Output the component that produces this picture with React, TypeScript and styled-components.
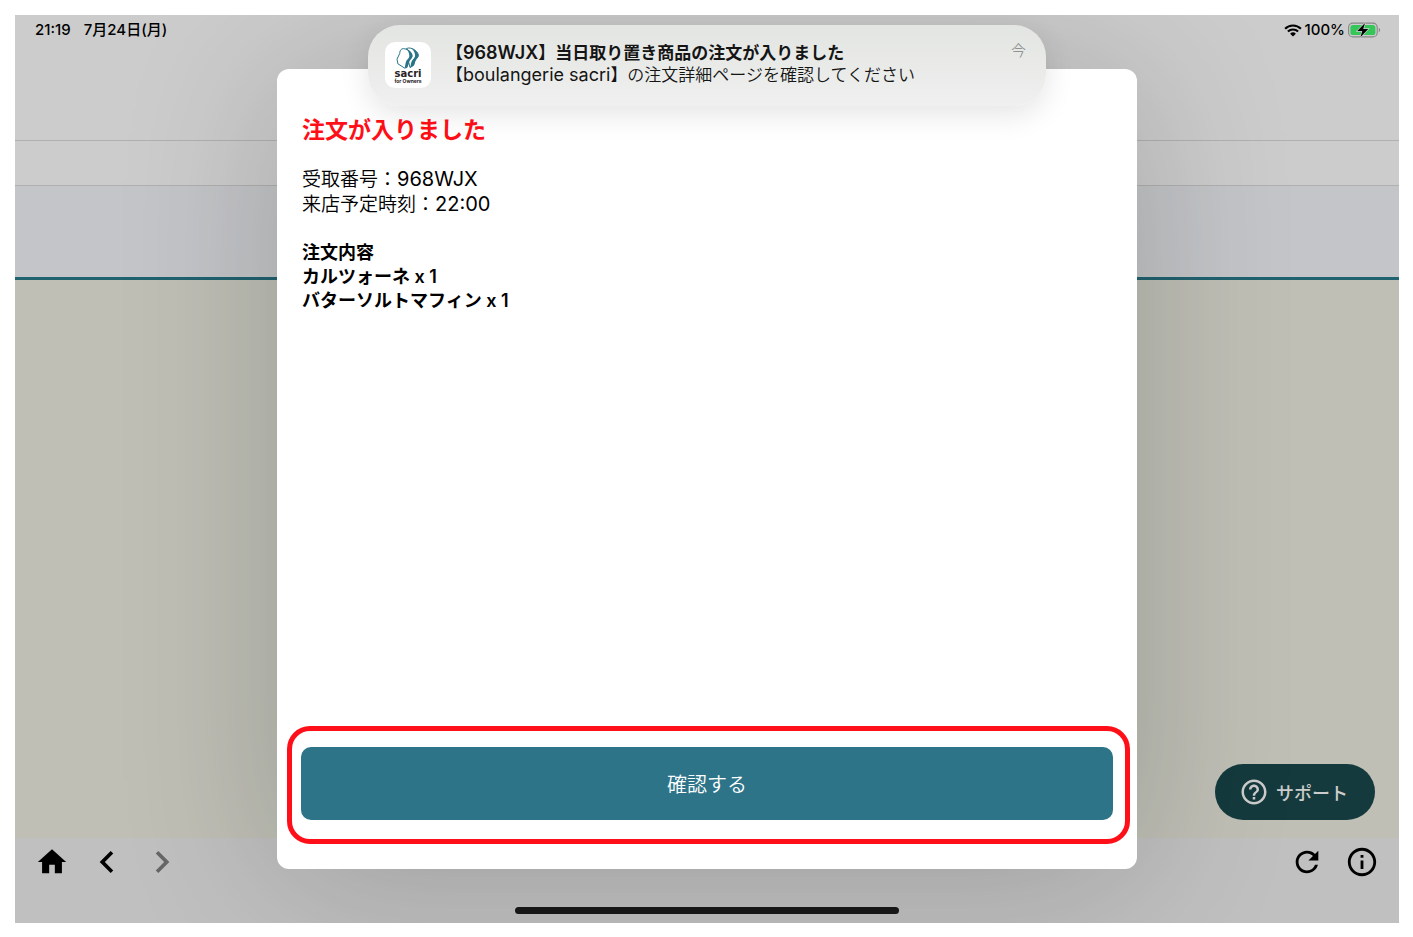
import React from 'react';
import styled, { createGlobalStyle } from 'styled-components';
import {
  MdHome,
  MdChevronLeft,
  MdChevronRight,
  MdRefresh,
  MdInfoOutline,
  MdHelpOutline,
} from 'react-icons/md';

const GlobalStyle = createGlobalStyle`
  * { box-sizing: border-box; }
  body {
    margin: 0;
    background: #fff;
    color: #000;
    font-family: Inter, "Noto Sans CJK JP", sans-serif;
    -webkit-font-smoothing: antialiased;
  }
  button { font: inherit; border: 0; margin: 0; cursor: pointer; }
  h1, h2, p, ul { margin: 0; padding: 0; }
`;

const Page = styled.div`
  min-height: 100vh;
  padding: 15px 14px 14px 15px;
  display: grid;
`;

const Screen = styled.div`
  position: relative;
  display: grid;
  grid-template: 1fr / 1fr;
  overflow: hidden;
`;

const AppLayer = styled.div`
  grid-area: 1 / 1;
  display: flex;
  flex-direction: column;
`;

const Header = styled.header`
  height: 126px;
  padding: 5px 18px 0 20px;
  background: #ccc;
  border-bottom: 1px solid #b0b0b0;
  display: flex;
  justify-content: space-between;
  align-items: flex-start;
`;

const StatusGroup = styled.div<{ $gap: number }>`
  display: flex;
  align-items: center;
  gap: ${(p) => p.$gap}px;
  height: 20px;
  font-size: 15px;
  line-height: 20px;
  font-weight: 500;
`;

const SubHeader = styled.div`
  height: 45px;
  background: #ccc;
  border-bottom: 1px solid #b0b0b0;
`;

const TabStrip = styled.div`
  height: 94px;
  background: #c4c5c8;
  border-bottom: 3px solid #20626f;
`;

const Content = styled.main`
  flex: 1;
  min-height: 200px;
  background: #bfbfb6;
  display: flex;
  justify-content: flex-end;
  align-items: flex-end;
  padding: 0 24px 18px;
`;

const SupportButton = styled.button`
  width: 160px;
  height: 56px;
  padding: 0 24px;
  border-radius: 28px;
  background: #143a3d;
  color: #ccc;
  display: flex;
  align-items: center;
  gap: 7px;
  font-family: "Noto Sans CJK JP", sans-serif;
  font-size: 18px;
  line-height: 24px;
  font-weight: 500;
  white-space: nowrap;

  svg { flex: none; }
`;

const BottomBar = styled.nav`
  height: 85px;
  background: #c0c0c0;
  padding: 0 10px 9px 9px;
  display: flex;
  flex-direction: column;
  justify-content: space-between;
  align-items: center;
`;

const NavRow = styled.div`
  width: 100%;
  display: flex;
  justify-content: space-between;
`;

const NavGroup = styled.div`
  display: flex;
`;

const NavButton = styled.button<{ $muted?: boolean }>`
  width: 55px;
  height: 48px;
  padding: 0;
  background: none;
  color: ${(p) => (p.$muted ? '#666' : '#000')};
  display: flex;
  align-items: center;
  justify-content: center;
`;

const HomeIndicator = styled.div`
  width: 384px;
  max-width: 60%;
  height: 7px;
  border-radius: 4px;
  background: #181818;
`;

const Overlay = styled.div`
  grid-area: 1 / 1;
  z-index: 1;
  padding: 54px 20px;
  display: flex;
  justify-content: center;
  pointer-events: none;
`;

const Dialog = styled.section`
  width: 100%;
  max-width: 860px;
  border-radius: 12px;
  background: #fff;
  box-shadow: 0 10px 160px rgba(0, 14, 0, 0.2);
  display: flex;
  flex-direction: column;
  justify-content: space-between;
  pointer-events: auto;
`;

const OrderDetails = styled.div`
  padding: 44px 25px 24px;
`;

const OrderTitle = styled.h1`
  font-size: 23px;
  line-height: 34px;
  font-weight: 700;
  color: #ff0f17;
`;

const OrderInfo = styled.div`
  margin-top: 20px;
  font-size: 19px;
  line-height: 24px;
  font-weight: 350;
`;

const InfoValue = styled.span`
  font-size: 20px;
  font-weight: 400;
`;

const OrderItems = styled.div`
  margin-top: 24px;
  font-size: 18px;
  line-height: 24px;
  font-weight: 600;

  h2 { font: inherit; }
  ul { list-style: none; }
`;

const ConfirmArea = styled.div`
  margin: 0 7px 25px 10px;
  padding: 16px 12px 19px 9px;
  border: 5px solid #ff0f17;
  border-radius: 23px;
`;

const ConfirmButton = styled.button`
  display: block;
  width: 100%;
  height: 73px;
  border-radius: 10px;
  background: #2d7489;
  color: #fff;
  font-size: 20px;
  font-weight: 350;
`;

const Notification = styled.aside`
  position: absolute;
  z-index: 2;
  top: 10px;
  left: 50%;
  transform: translateX(-50%);
  width: 678px;
  max-width: calc(100% - 40px);
  height: 81px;
  padding: 17px 20px 0 17px;
  border-radius: 32px;
  background: linear-gradient(#e3e5e2, #eff0ef);
  box-shadow: 0 8px 30px rgba(0, 0, 0, 0.11);
  display: flex;
  align-items: flex-start;
`;

const NotificationText = styled.div`
  flex: 1;
  margin-left: 15px;
  font-size: 17px;
  line-height: 22px;
  font-weight: 350;
  color: #151515;
  white-space: nowrap;
`;

const NotificationTitle = styled.h2`
  font: inherit;
  font-weight: 600;
`;

const NotificationName = styled.span<{ $strong?: boolean }>`
  font-size: 18px;
  font-weight: ${(p) => (p.$strong ? 600 : 400)};
`;

const NotificationTime = styled.time`
  font-size: 15px;
  line-height: 18px;
  font-weight: 300;
  color: #80827f;
`;

const WifiIcon = () => (
  <svg width="18" height="13" viewBox="0 0 18 13" aria-hidden="true">
    <g fill="none" stroke="#000" strokeWidth="2.1">
      <path d="M1.1 4.7a11.2 11.2 0 0 1 15.8 0" />
      <path d="M3.9 7.6a7.2 7.2 0 0 1 10.2 0" />
    </g>
    <path d="M9 12.6 6.1 9.8a4.1 4.1 0 0 1 5.8 0z" fill="#000" />
  </svg>
);

const BatteryIcon = () => (
  <svg width="33" height="16" viewBox="0 0 33 16" aria-hidden="true">
    <rect x="0.6" y="1.1" width="28.6" height="13.8" rx="4.2" fill="none" stroke="#858585" strokeWidth="1.1" />
    <rect x="2.4" y="2.9" width="25" height="10.2" rx="2.6" fill="#35c65a" />
    <path d="M30.8 5.8c1.8.8 1.8 3.6 0 4.4z" fill="#858585" />
    <path d="M17 .9 9.3 9h5l-1.9 6.2L20.2 7h-5z" fill="#000" stroke="#ccc" strokeWidth="1.4" paintOrder="stroke" />
  </svg>
);

const SacriLogo = () => (
  <svg width="46" height="46" viewBox="0 0 46 46" role="img" aria-label="sacri for Owners">
    <rect width="46" height="46" rx="10" fill="#fff" />
    <g strokeLinejoin="round">
      <path
        d="M20.5 7.500C22 5.600 25 5.500 28 7c3.400 1.700 5.800 4.800 5.200 7-.4 1.600-2.500 2.900-3.300 5l-1.300 4.200-3.600 2.300z"
        fill="#fff" stroke="#2b7488" strokeWidth="1"
      />
      <path
        d="M26.500 6.300C30 7.600 33.800 11 33.500 14c-.3 1.900-2.500 3-3.300 5.200L28.800 23.500 25 26l1.400-6c.7-2.500 3.400-3.700 3.700-6 .2-2.500-1.300-5.400-3.600-7.700z"
        fill="#2b7488"
      />
      <path
        d="M16.800 7c1.800-.9 4.800 0 7 1.700 2.300 1.800 3.600 4.100 3 6.300-.5 1.500-2.500 2.500-3.200 4.600L22 25.500 19.500 26l-6.600-4.200-.9-4.600 2.700-5.700c.1-2 .6-3.700 2.100-4.500z"
        fill="#fff" stroke="#2b7488" strokeWidth="1"
      />
      <path
        d="M21.200 6.800c3.500 1.200 6.600 4.600 6.300 7.500-.3 2-2.600 3.200-3.300 5.400L22.800 24 19.600 26.500l1.200-6.300c.6-2.500 3.200-3.500 3.500-5.700.2-2.600-.8-5.600-3.100-7.700z"
        fill="#2b7488"
      />
    </g>
    <text x="23" y="35" textAnchor="middle" fontFamily="DejaVu Sans, sans-serif" fontWeight="700" fontSize="10" fill="#2a2224">sacri</text>
    <text x="23" y="41" textAnchor="middle" fontFamily="Inter, sans-serif" fontWeight="700" fontSize="5" fill="#2a2224">for Owners</text>
  </svg>
);

const ORDER = {
  code: '968WJX',
  visitTime: '22:00',
  items: [
    { name: 'カルツォーネ', count: 1 },
    { name: 'バターソルトマフィン', count: 1 },
  ],
};

export default function App() {
  return (
    <>
      <GlobalStyle />
      <Page>
        <Screen>
          <AppLayer>
            <Header>
              <StatusGroup $gap={13}>
                <span>21:19</span>
                <span>7月24日(月)</span>
              </StatusGroup>
              <StatusGroup $gap={3}>
                <WifiIcon />
                <span>100%</span>
                <BatteryIcon />
              </StatusGroup>
            </Header>
            <SubHeader />
            <TabStrip />
            <Content>
              <SupportButton type="button">
                <MdHelpOutline size={30} />
                サポート
              </SupportButton>
            </Content>
            <BottomBar>
              <NavRow>
                <NavGroup>
                  <NavButton type="button" aria-label="ホーム"><MdHome size={34} /></NavButton>
                  <NavButton type="button" aria-label="戻る"><MdChevronLeft size={44} /></NavButton>
                  <NavButton type="button" aria-label="進む" $muted><MdChevronRight size={44} /></NavButton>
                </NavGroup>
                <NavGroup>
                  <NavButton type="button" aria-label="再読み込み"><MdRefresh size={34} /></NavButton>
                  <NavButton type="button" aria-label="情報"><MdInfoOutline size={34} /></NavButton>
                </NavGroup>
              </NavRow>
              <HomeIndicator />
            </BottomBar>
          </AppLayer>

          <Overlay>
            <Dialog role="dialog" aria-labelledby="order-title">
              <OrderDetails>
                <OrderTitle id="order-title">注文が入りました</OrderTitle>
                <OrderInfo>
                  <p>受取番号：<InfoValue>{ORDER.code}</InfoValue></p>
                  <p>来店予定時刻：<InfoValue>{ORDER.visitTime}</InfoValue></p>
                </OrderInfo>
                <OrderItems>
                  <h2>注文内容</h2>
                  <ul>
                    {ORDER.items.map((item) => (
                      <li key={item.name}>{`${item.name} x ${item.count}`}</li>
                    ))}
                  </ul>
                </OrderItems>
              </OrderDetails>
              <ConfirmArea>
                <ConfirmButton type="button">確認する</ConfirmButton>
              </ConfirmArea>
            </Dialog>
          </Overlay>

          <Notification role="status">
            <SacriLogo />
            <NotificationText>
              <NotificationTitle>
                【<NotificationName $strong>{ORDER.code}</NotificationName>】当日取り置き商品の注文が入りました
              </NotificationTitle>
              <p>
                【<NotificationName>boulangerie sacri</NotificationName>】の注文詳細ページを確認してください
              </p>
            </NotificationText>
            <NotificationTime>今</NotificationTime>
          </Notification>
        </Screen>
      </Page>
    </>
  );
}
